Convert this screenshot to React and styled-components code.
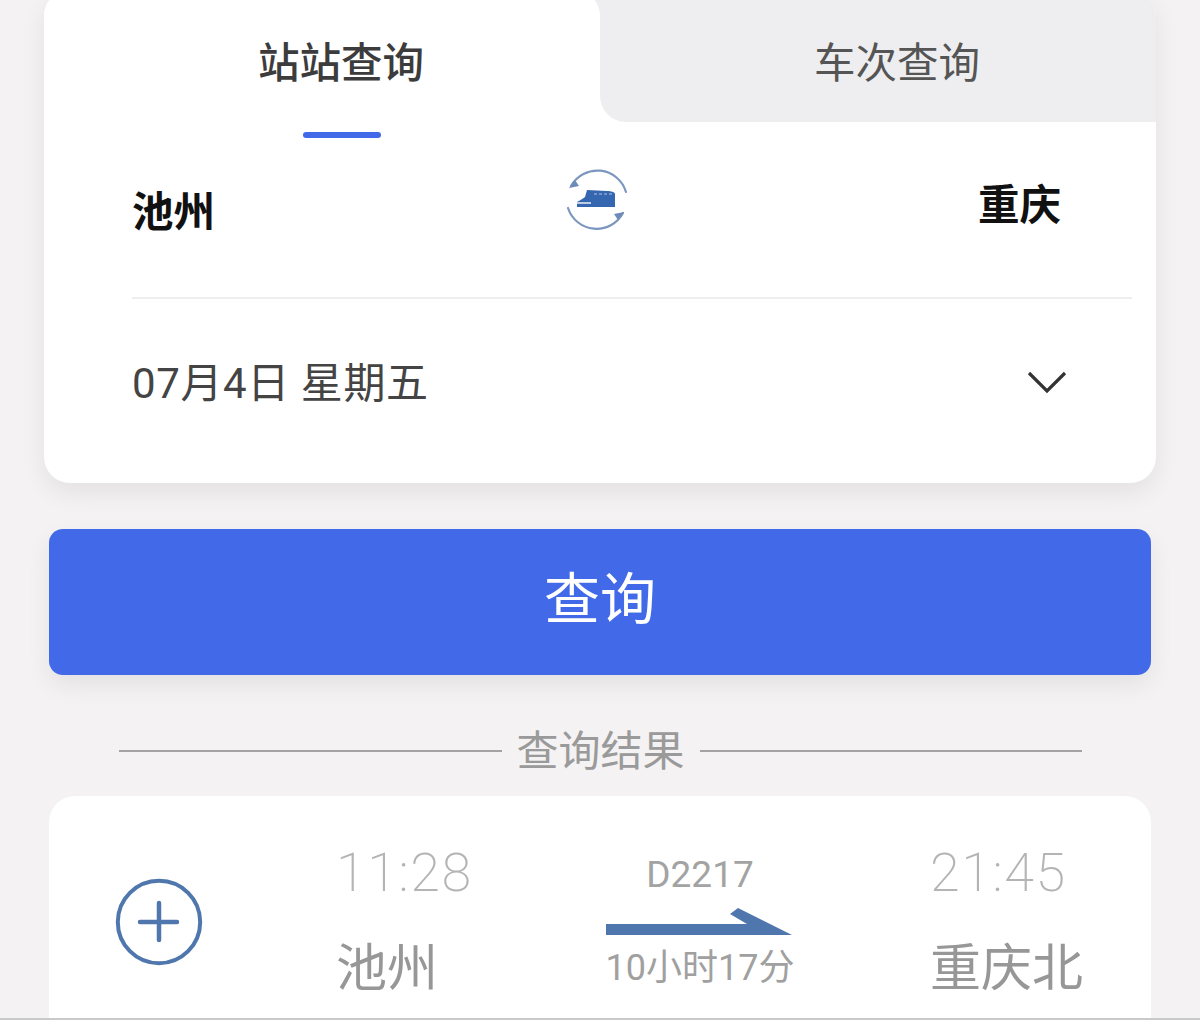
import React from "react";
import styled, { createGlobalStyle } from "styled-components";

const cjk = `Roboto, "Noto Sans CJK SC", "Noto Sans", sans-serif`;

const GlobalStyle = createGlobalStyle`
  html, body {
    margin: 0;
    padding: 0;
    background: #f4f2f3;
    font-family: ${cjk};
  }
`;

const Page = styled.div`
  width: 1200px;
  height: 1020px;
  box-sizing: border-box;
  overflow: hidden;
  display: flex;
  flex-direction: column;
  border-bottom: 2px solid #c9c9c9;
  background: #f4f2f3;
`;

const SearchCard = styled.div`
  margin: -10px 44px 0;
  height: 493px;
  flex-shrink: 0;
  box-sizing: border-box;
  background: #fff;
  border-radius: 26px;
  box-shadow: 0 10px 24px rgba(0, 0, 0, 0.07);
`;

const Tabs = styled.div`
  display: grid;
  grid-template-columns: 556px 556px;
  height: 132px;
`;

const Tab = styled.div`
  position: relative;
  z-index: ${(p) => (p.$active ? 1 : 0)};
  display: flex;
  justify-content: center;
  padding: 47px 0 0 38px;
  box-sizing: border-box;
  font-size: 41.5px;
  line-height: 54px;
  font-weight: ${(p) => (p.$active ? 500 : 400)};
  color: ${(p) => (p.$active ? "#3c3c3c" : "#555")};
  background: ${(p) => (p.$active ? "#fff" : "#eeeef0")};
  border-radius: ${(p) => (p.$active ? "26px 26px 0 0" : "0 26px 0 26px")};

  /* grey showing behind the active tab's rounded top corner */
  &::before {
    content: ${(p) => (p.$active ? "none" : '""')};
    position: absolute;
    left: -26px;
    top: 0;
    width: 26px;
    height: 26px;
    background: #eeeef0;
  }
`;

const Underline = styled.div`
  width: 78px;
  height: 6px;
  margin: 10px 0 0 259px;
  border-radius: 3px;
  background: #4169e8;
`;

const Stations = styled.div`
  display: grid;
  grid-template-columns: 434px 62px 1fr;
  margin: 0 24px 0 88px;
  height: 161px;
  box-sizing: border-box;
  border-bottom: 2px solid #eeeeee;
`;

const From = styled.div`
  padding-top: 48px;
  font-size: 41.5px;
  line-height: 54px;
  font-weight: 700;
  color: #111;
`;

const To = styled(From)`
  padding: 41px 71px 0 0;
  text-align: right;
`;

const SwapIcon = styled.svg`
  width: 62px;
  height: 66px;
  margin-top: 28px;
`;

const DateRow = styled.div`
  display: flex;
  align-items: center;
  justify-content: space-between;
  margin: 0 88px;
  height: 164px;
  box-sizing: border-box;
  font-size: 42px;
  color: #444;
`;

const DateText = styled.div`
  margin-bottom: 4px;
  letter-spacing: 0.6px;
`;

const Chevron = styled.svg`
  width: 42px;
  height: 26px;
  margin-top: 2px;
`;

const QueryButton = styled.button`
  margin: 46px 49px 0;
  height: 146px;
  flex-shrink: 0;
  border: 0;
  padding: 0 0 16px;
  border-radius: 14px;
  background: #4169e8;
  color: #fff;
  font-family: ${cjk};
  font-size: 56px;
  box-shadow: 0 10px 24px rgba(0, 0, 0, 0.07);
`;

const ResultTitle = styled.div`
  display: flex;
  align-items: center;
  gap: 15px;
  margin: 46px 118px 0 119px;
  height: 60px;
  flex-shrink: 0;
  font-size: 42px;
  color: #9a9a9a;

  span {
    margin-bottom: 8px;
  }

  &::before,
  &::after {
    content: "";
    flex: 1;
    height: 2px;
    background: #a3a3a3;
  }
`;

const ResultCard = styled.div`
  display: grid;
  grid-template-columns: 287px 264px 330px 1fr;
  margin: 15px 49px 0;
  flex: 1;
  background: #fff;
  border-radius: 26px 26px 0 0;
`;

const AddColumn = styled.div`
  padding: 82px 0 0 66px;
`;

const AddIcon = styled.svg`
  width: 88px;
  height: 88px;
  display: block;
`;

const TimeColumn = styled.div`
  display: flex;
  flex-direction: column;
  padding-top: 43px;
`;

const Time = styled.div`
  font-size: 54px;
  line-height: 68px;
  font-weight: 200;
  letter-spacing: 1.5px;
  color: #b4b4b4;
`;

const Station = styled.div`
  margin-top: 29px;
  font-size: 51px;
  line-height: 66px;
  color: #979797;
  white-space: nowrap;
`;

const TrainColumn = styled.div`
  display: flex;
  flex-direction: column;
  width: 200px;
  align-items: center;
  padding-top: 56px;
`;

const TrainNo = styled.div`
  font-size: 37px;
  line-height: 46px;
  color: #a3a3a3;
`;

const Arrow = styled.svg`
  width: 188px;
  height: 30px;
  margin: 10px 2px 0 0;
  display: block;
`;

const Duration = styled.div`
  margin-top: 6px;
  font-size: 36px;
  line-height: 48px;
  color: #a0a0a0;
  white-space: nowrap;
`;

export default function App() {
  return (
    <Page>
      <GlobalStyle />
      <SearchCard>
        <Tabs>
          <Tab $active>站站查询</Tab>
          <Tab>车次查询</Tab>
        </Tabs>
        <Underline />
        <Stations>
          <From>池州</From>
          <SwapIcon viewBox="0 0 62 66" fill="none">
            <path d="M5 20A30 30 0 0 1 60 26" stroke="#7c97bf" strokeWidth="2.2" strokeLinecap="round" />
            <path d="M3 22l10-2-4-6z" fill="#6d8bb8" />
            <path d="M2 42A30 30 0 0 0 57 47" stroke="#7c97bf" strokeWidth="2.2" strokeLinecap="round" />
            <path d="M58 46l-10 2 4 6z" fill="#6d8bb8" />
            <path d="M11 36c3-2 6-3 8-5l2-7 20 1c4 0 8 1 8 3v13H11z" fill="#3567b0" />
            <path d="M11 37h14" stroke="#dfe7f3" strokeWidth="1.6" />
            <path d="M28 28h18" stroke="#8aa6d2" strokeWidth="1.5" strokeDasharray="3 2" />
          </SwapIcon>
          <To>重庆</To>
        </Stations>
        <DateRow>
          <DateText>07月4日 星期五</DateText>
          <Chevron viewBox="0 0 42 26" fill="none">
            <path d="M3 4l18 18L39 4" stroke="#333" strokeWidth="3.2" />
          </Chevron>
        </DateRow>
      </SearchCard>
      <QueryButton>查询</QueryButton>
      <ResultTitle>
        <span>查询结果</span>
      </ResultTitle>
      <ResultCard>
        <AddColumn>
          <AddIcon viewBox="0 0 88 88" fill="none">
            <circle cx="44" cy="44" r="41.2" stroke="#4f76ad" strokeWidth="4" />
            <path d="M44 25v37M25 44h37" stroke="#4f76ad" strokeWidth="4.5" strokeLinecap="round" />
          </AddIcon>
        </AddColumn>
        <TimeColumn>
          <Time>11:28</Time>
          <Station>池州</Station>
        </TimeColumn>
        <TrainColumn>
          <TrainNo>D2217</TrainNo>
          <Arrow viewBox="0 0 188 30" fill="none">
            <path d="M1 16h141l-17-10 8-6 54 27H1z" fill="#4f76ad" />
          </Arrow>
          <Duration>10小时17分</Duration>
        </TrainColumn>
        <TimeColumn>
          <Time>21:45</Time>
          <Station>重庆北</Station>
        </TimeColumn>
      </ResultCard>
    </Page>
  );
}
